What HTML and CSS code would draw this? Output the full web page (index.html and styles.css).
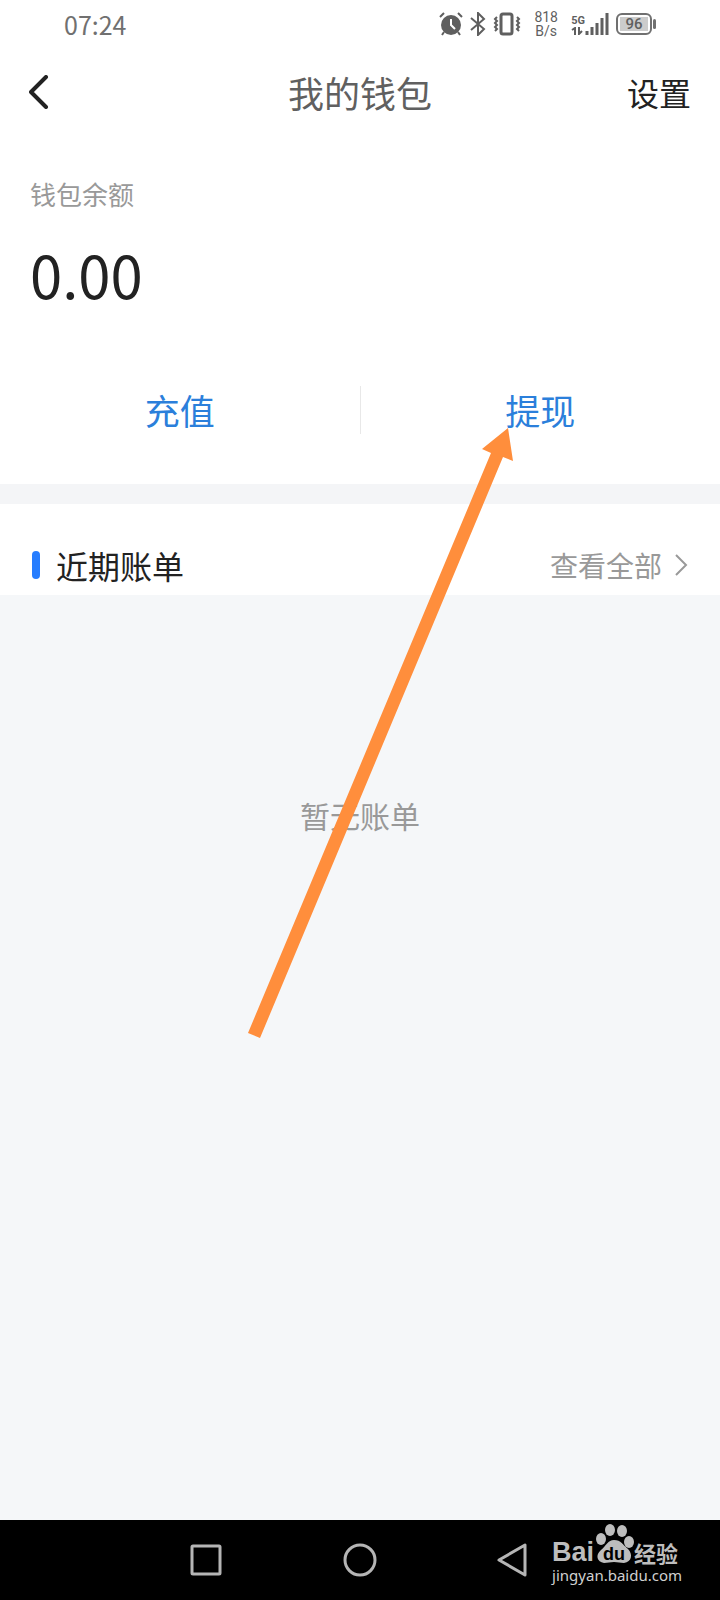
FILE: index.html
```
<!DOCTYPE html>
<html lang="zh-CN">
<head>
	<meta charset="UTF-8">
	<meta name="viewport" content="width=device-width, initial-scale=1">
	<title>我的钱包</title>
	<link rel="stylesheet" href="styles.css">
</head>
<body>
	<div class="status">
		<span class="time">07:24</span>
		<div class="status-icons">
			<svg width="24" height="24" viewBox="0 0 24 24">
				<circle cx="12" cy="13" r="10" fill="#5f5f5f"/>
				<path d="M1 5l4-4M23 5l-4-4M5 20l-2 3M19 20l2 3" stroke="#5f5f5f" stroke-width="2"/>
				<path d="M12 7v6l4 4" fill="none" stroke="#fff" stroke-width="2"/>
			</svg>
			<svg width="16" height="24" viewBox="0 0 16 24">
				<path d="M1 6l13 11-6 6V1l6 6L1 18" fill="none" stroke="#5f5f5f" stroke-width="2"/>
			</svg>
			<svg width="28" height="24" viewBox="0 0 28 24">
				<rect x="8" y="2" width="11" height="20" rx="2" fill="none" stroke="#5f5f5f" stroke-width="3"/>
				<path d="M4 5l-2 2 2 2-2 2 2 2-2 2 2 2-2 2M24 5l2 2-2 2 2 2-2 2 2 2-2 2 2 2" fill="none" stroke="#5f5f5f" stroke-width="2"/>
			</svg>
			<div class="speed"><span>818</span><span>B/s</span></div>
			<div class="signal">
				<div class="net">
					<span>5G</span>
					<svg width="12" height="8" viewBox="0 0 12 8">
						<path d="M1 3l3-2v7M8 0v7l3-3" fill="none" stroke="#5f5f5f" stroke-width="2"/>
					</svg>
				</div>
				<svg width="24" height="22" viewBox="0 0 24 22">
					<path d="M2 22v-4M7 22v-8M12 22V10M17 22V5M22 22V0" stroke="#5f5f5f" stroke-width="3"/>
				</svg>
			</div>
			<div class="battery"><span>96</span></div>
		</div>
	</div>

	<header class="header">
		<button class="back" aria-label="返回">
			<svg width="20" height="34" viewBox="0 0 20 34">
				<path d="M17 2L2 17l15 15" fill="none" stroke="#222" stroke-width="4" stroke-linecap="round" stroke-linejoin="round"/>
			</svg>
		</button>
		<h1>我的钱包</h1>
		<button class="setting">设置</button>
	</header>

	<section class="balance">
		<p class="label">钱包余额</p>
		<p class="amount">0.00</p>
		<div class="actions">
			<button>充值</button>
			<button>提现</button>
		</div>
	</section>

	<section class="bill-title">
		<h2>近期账单</h2>
		<a href="#">查看全部
			<svg width="14" height="24" viewBox="0 0 14 24">
				<path d="M2 2l10 10L2 22" fill="none" stroke="#999" stroke-width="2"/>
			</svg>
		</a>
	</section>

	<main class="bills">
		<p>暂无账单</p>
	</main>

	<footer class="nav">
		<button aria-label="最近任务">
			<svg width="34" height="34" viewBox="0 0 34 34">
				<rect x="3" y="3" width="28" height="28" rx="1" fill="none" stroke="#b5b5b5" stroke-width="3"/>
			</svg>
		</button>
		<button aria-label="主页">
			<svg width="34" height="34" viewBox="0 0 34 34">
				<circle cx="17" cy="17" r="15" fill="none" stroke="#b5b5b5" stroke-width="3"/>
			</svg>
		</button>
		<button aria-label="返回上一页">
			<svg width="34" height="34" viewBox="0 0 34 34">
				<path d="M28 2v30L2 17z" fill="none" stroke="#b5b5b5" stroke-width="3" stroke-linejoin="round"/>
			</svg>
		</button>
		<div class="watermark">
			<div class="logo">
				<span class="logo-en">Bai</span>
				<svg width="40" height="43" viewBox="0 0 40 43">
					<g fill="#bdbdbd">
						<ellipse cx="7" cy="17" rx="5" ry="6"/>
						<ellipse cx="16" cy="8" rx="5" ry="6"/>
						<ellipse cx="28" cy="9" rx="5" ry="6"/>
						<ellipse cx="35" cy="20" rx="5" ry="6"/>
						<path d="M20 18c-6 0-8 6-13 10-6 5-4 12 3 13 4 0 6-1 10-1s6 1 10 1c8-1 9-9 4-14-5-4-7-9-14-9z"/>
					</g>
					<text class="logo-du" x="20" y="38" text-anchor="middle">du</text>
				</svg>
				<span class="logo-cn">经验</span>
			</div>
			<a href="#">jingyan.baidu.com</a>
		</div>
	</footer>

	<!-- 指向提现按钮的箭头 -->
	<svg class="arrow" width="268" height="612" viewBox="0 0 268 612">
		<path d="M261 1L235 22l9 4L1 606l12 5L256 30l10 4z" fill="#ff8e3c"/>
	</svg>
</body>
</html>
```
FILE: styles.css
```
* {margin: 0;padding: 0;box-sizing: border-box;}
body {
	min-height: 100vh;
	display: flex;
	flex-direction: column;
	position: relative;
	background: #fff;
	color: #222;
	font-family: "Noto Sans CJK SC", "Liberation Sans", sans-serif;
}
button {border: 0;background: none;font-family: inherit;color: inherit;cursor: pointer;}
a {text-decoration: none;}
svg {display: block;flex: none;}

.status {height: 48px;padding: 0 68px 0 64px;display: flex;align-items: center;justify-content: space-between;color: #5f5f5f;}
.time {font-size: 25px;line-height: 48px;color: #707070;}
.status-icons {display: flex;align-items: center;gap: 7px;}
.speed {width: 36px;display: flex;flex-direction: column;align-items: center;font: 14px/14px Roboto, sans-serif;}
.signal {display: flex;align-items: flex-end;}
.net {font: bold 11px/12px Roboto, sans-serif;}
.battery {width: 36px;height: 22px;padding: 2px;border: 2px solid #707070;border-radius: 6px;position: relative;}
.battery span {display: block;background: #ccc;font: 500 15px/14px Roboto, sans-serif;text-align: center;}
.battery::after {content: "";width: 3px;height: 10px;border-radius: 2px;background: #707070;position: absolute;right: -6px;top: 4px;}

.header {height: 88px;padding: 0 29px;display: grid;grid-template-columns: 1fr auto 1fr;align-items: center;}
.header h1 {font-size: 36px;line-height: 48px;font-weight: 400;color: #606060;}
.back {justify-self: start;}
.setting {justify-self: end;font-size: 32px;line-height: 48px;}

.balance {padding: 38px 0 50px;border-bottom: 20px solid #f4f5f7;}
.label {padding: 0 30px;font-size: 26px;line-height: 40px;color: #999;}
.amount {padding: 0 30px;margin-top: 20px;font-size: 58px;line-height: 80px;}
.actions {margin-top: 72px;display: flex;}
.actions button {flex: 1;font-size: 35px;line-height: 48px;color: #2b7fdb;}
.actions button + button {border-left: 1px solid #e8e8e8;}

.bill-title {height: 91px;padding: 31px 32px 0;display: flex;align-items: flex-start;justify-content: space-between;}
.bill-title h2 {display: flex;align-items: center;gap: 16px;font-size: 32px;line-height: 60px;font-weight: 400;}
.bill-title h2::before {content: "";width: 8px;height: 28px;border-radius: 4px;background: #267dff;}
.bill-title a {display: flex;align-items: center;gap: 12px;font-size: 28px;line-height: 60px;color: #999;}

.bills {flex: 1;padding-top: 200px;background: #f5f7f9;text-align: center;}
.bills p {font-size: 30px;line-height: 40px;color: #999;}

.nav {height: 80px;display: flex;align-items: center;justify-content: center;gap: 120px;background: #000;position: relative;}
.watermark {position: absolute;right: 38px;top: 2px;}
.watermark a {display: block;font: 15px/20px "Noto Sans", sans-serif;color: #d0d0d0;}
.logo {display: flex;align-items: flex-end;color: #bdbdbd;}
.logo-en {font: bold 27px/26px "Liberation Sans", sans-serif;}
.logo-cn {font: bold 22px/26px "Noto Sans CJK SC", sans-serif;}
.logo-du {font: bold 18px "Liberation Sans", sans-serif;}

.arrow {position: absolute;left: 247px;top: 427px;pointer-events: none;}
```
